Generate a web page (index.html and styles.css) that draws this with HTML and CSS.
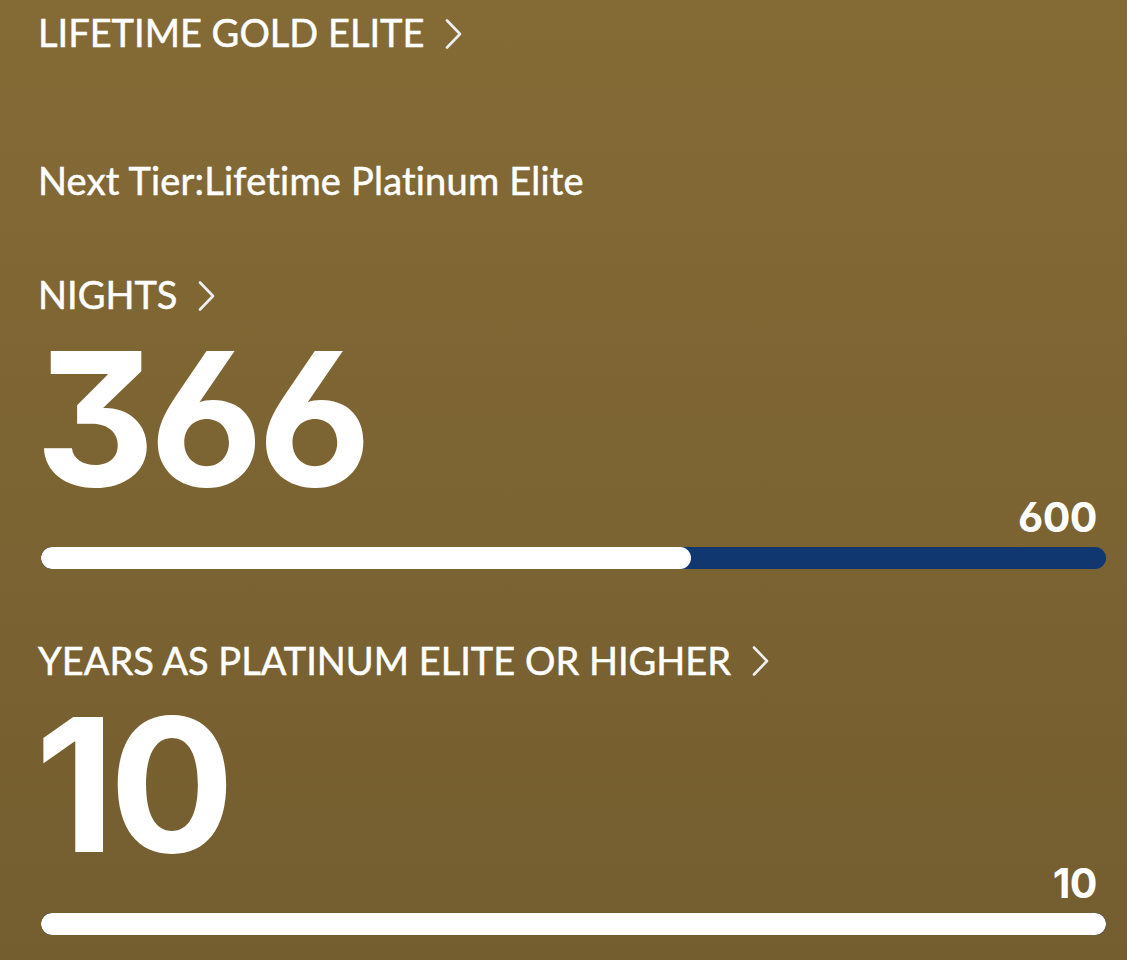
FILE: index.html
```html
<!DOCTYPE html>
<html lang="en">
<head>
    <meta charset="UTF-8">
    <meta name="viewport" content="width=device-width, initial-scale=1.0">
    <title>Elite Status</title>

    <link rel="stylesheet" href="styles.css">
</head>
<body>
    <div class="status">
        <a class="link-title tier" href="#">LIFETIME GOLD ELITE
            <svg class="chevron" width="17" height="30" viewBox="0 0 17 30"><polyline points="2,1.5 15,15 2,28.5"/></svg>
        </a>

        <p class="next-tier">Next Tier:Lifetime Platinum Elite</p>

        <div class="metric">
            <a class="link-title" href="#">NIGHTS
                <svg class="chevron" width="17" height="30" viewBox="0 0 17 30"><polyline points="2,1.5 15,15 2,28.5"/></svg>
            </a>
            <p class="metric-value">366</p>
            <p class="metric-goal">600</p>
            <div class="bar"><div class="bar-fill" style="width: 61%"></div></div>
        </div>

        <div class="metric">
            <a class="link-title" href="#">YEARS AS PLATINUM ELITE OR HIGHER
                <svg class="chevron" width="17" height="30" viewBox="0 0 17 30"><polyline points="2,1.5 15,15 2,28.5"/></svg>
            </a>
            <p class="metric-value">10</p>
            <p class="metric-goal">10</p>
            <div class="bar"><div class="bar-fill" style="width: 100%"></div></div>
        </div>
    </div>
</body>
</html>
```

FILE: styles.css
```css
body{
    margin: 0;
    min-height: 960px;
    background: linear-gradient(180deg, rgb(132, 107, 54) 0%, rgb(116, 93, 47) 100%);
    color: white;
    font-family: Lato, "Open Sans", Arial, sans-serif;
}
.status{
    padding: 13px 21px 0 38px;
}
p{
    margin: 0;
}
.link-title{
    display: inline-flex;
    align-items: center;
    gap: 21px;
    color: white;
    text-decoration: none;
    font-size: 38px;
    line-height: 38px;
    -webkit-text-stroke: 0.5px white;
}
.chevron{
    margin-top: 3px;
}
.chevron polyline{
    fill: none;
    stroke: #efefef;
    stroke-width: 2.6;
    stroke-linecap: round;
    stroke-linejoin: round;
}
.next-tier{
    margin-top: 110px;
    font-size: 38px;
    line-height: 38px;
    letter-spacing: 0.2px;
    -webkit-text-stroke: 0.5px white;
}
.metric{
    display: flex;
    flex-direction: column;
}
.next-tier + .metric{
    margin-top: 76px;
}
.metric + .metric{
    margin-top: 72px;
}
.metric .link-title{
    align-self: flex-start;
}
/* numbers use Inter for the flat-top three */
.metric-value,
.metric-goal{
    font-family: Inter, Lato, sans-serif;
    font-weight: bold;
    font-feature-settings: "cv09", "cv03";
}
.metric-value{
    margin-top: 32px;
    margin-left: -3px;
    font-size: 186px;
    line-height: 0.8;
    letter-spacing: -6px;
}
.metric-goal{
    margin-top: 3px;
    padding-right: 9px;
    text-align: right;
    font-size: 41px;
    line-height: 41px;
    letter-spacing: -0.5px;
}
.bar{
    margin: 9px 0 0 3px;
    height: 22px;
    border-radius: 11px;
    background-color: rgb(17, 55, 112);
    overflow: hidden;
}
.bar-fill{
    height: 100%;
    border-radius: 11px;
    background-color: white;
}
```
